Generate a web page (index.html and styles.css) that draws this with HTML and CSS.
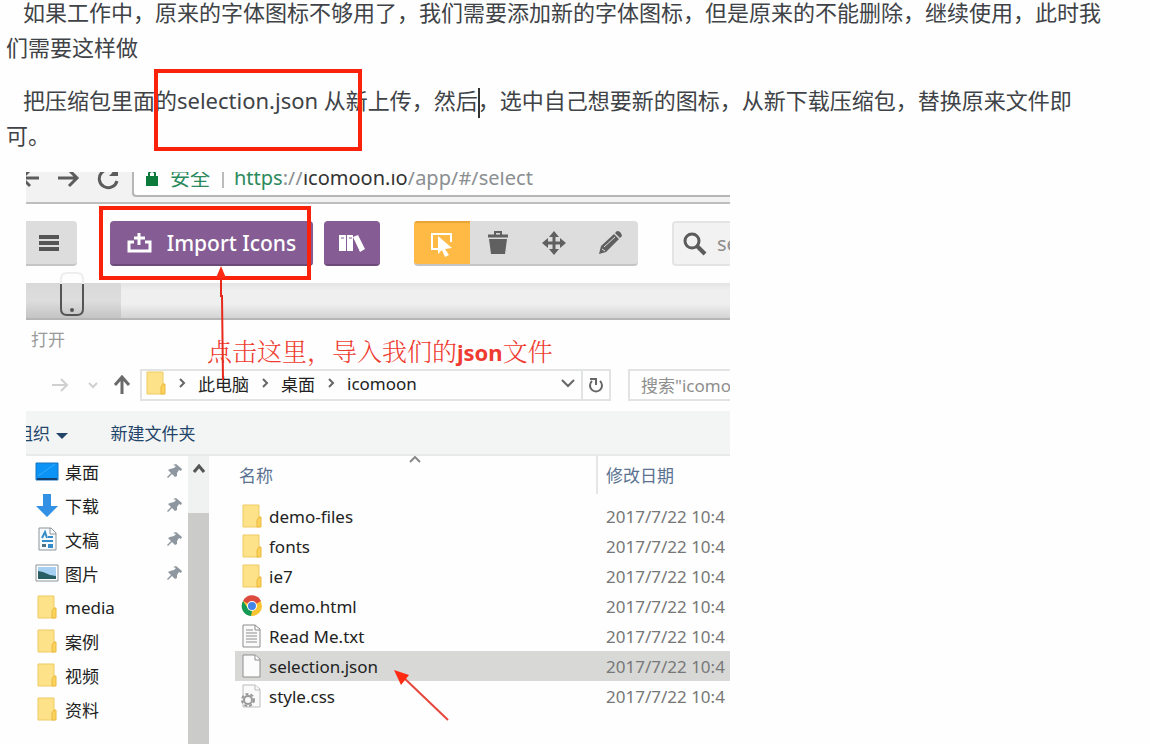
FILE: index.html
```
<!DOCTYPE html>
<html lang="zh-CN">
<head>
    <meta charset="UTF-8">
    <meta name="viewport" content="width=device-width, initial-scale=1.0">
    <title>追加字体图标</title>
    <link rel="stylesheet" href="styles.css">
</head>
<body>

    <!-- 公用图标 -->
    <svg class="sprite" width="0" height="0">
        <symbol id="folder" viewBox="0 0 20 24">
            <path d="M1 1h16v22H1z" fill="#fde28a" stroke="#efcb63"/>
            <path d="M15 23v-7l2-3h2v10z" fill="#fbd25c" stroke="#eab93f"/>
        </symbol>
        <symbol id="pin" viewBox="0 0 16 16">
            <path d="M9 1l6 5-1 2-2-1-2 3 0 3-2 1-3-3-4 4-1-1 4-4-3-3 2-1 4-1 2-2-3-1z" fill="#8e979f"/>
        </symbol>
        <symbol id="crumb" viewBox="0 0 8 12">
            <path d="M2 2l4 4-4 4" fill="none" stroke="#666" stroke-width="2"/>
        </symbol>
    </svg>

    <div class="article">
        <p>如果工作中，原来的字体图标不够用了，我们需要添加新的字体图标，但是原来的不能删除，继续使用，此时我<br>们需要这样做</p>
        <p>把压缩包里面的selection.json 从新上传，然后<span class="caret"></span>，选中自己想要新的图标，从新下载压缩包，替换原来文件即<br>可。</p>
        <div class="mark mark-text"></div>

        <div class="shot">
            <!-- 浏览器地址栏 -->
            <div class="browser">
                <svg class="nav-icons" width="94" height="24" viewBox="0 0 94 24" fill="none" stroke="#5c5c5c" stroke-width="3">
                    <path d="M13 12H-4M4 4l-8 8 8 8M32 12h18M43 4l8 8-8 8M90 8a9 9 0 1 0 1 7"/>
                    <path d="M92 1v9h-9z" fill="#5c5c5c" stroke="none"/>
                </svg>
                <div class="url">
                    <svg width="12" height="18" viewBox="0 0 12 18"><path d="M3 8V4q3-4 6 0v4" fill="none" stroke="#0b7a3b" stroke-width="2"/><path d="M0 7h12v10H0z" fill="#0b7a3b"/></svg>
                    <span class="safe">安全</span>
                    <span class="bar"></span>
                    <span class="address"><span class="green">https</span>://<b>icomoon.io</b>/app/#/select</span>
                </div>
            </div>

            <!-- icomoon 工具栏 -->
            <div class="toolbar">
                <button class="btn menu-btn" aria-label="菜单">
                    <svg width="20" height="16" viewBox="0 0 20 16"><path d="M0 2h20M0 8h20M0 14h20" stroke="#555" stroke-width="4"/></svg>
                </button>
                <button class="btn purple import-btn">
                    <svg width="26" height="22" viewBox="0 0 26 22" fill="none" stroke="#fff" stroke-width="3"><path d="M7 10H2v9h21v-9h-5M12 1v12M7 6h11"/></svg>
                    Import Icons
                </button>
                <button class="btn purple lib-btn" aria-label="图标库">
                    <svg width="26" height="18" viewBox="0 0 26 18" fill="#fff"><path d="M0 1h7v16H0zM8 1h6v16H8zM14 3l5-2 7 14-5 3z"/><path d="M2 4h3M10 4h3" stroke="#855c94"/></svg>
                </button>
                <div class="tools">
                    <button class="active" aria-label="选择">
                        <svg width="24" height="26" viewBox="0 0 24 26"><path d="M8 18H2V3h19v8" fill="none" stroke="#fff" stroke-width="2"/><path d="M8 5l14 12-7 1 4 6-4 2-3-7-4 4z" fill="#fff"/></svg>
                    </button>
                    <button aria-label="删除">
                        <svg width="22" height="24" viewBox="0 0 22 24"><path d="M1 5h20" fill="none" stroke="#606060" stroke-width="3"/><path d="M8 4V1h6v3" fill="none" stroke="#606060" stroke-width="2"/><path d="M2 8h18l-2 15H4z" fill="#606060"/></svg>
                    </button>
                    <button aria-label="移动">
                        <svg width="24" height="24" viewBox="0 0 24 24"><path d="M12 4v16M4 12h16" stroke="#606060" stroke-width="3"/><path d="M12 0l5 6H7zM12 24l5-6H7zM0 12l6-5v10zM24 12l-6-5v10z" fill="#606060"/></svg>
                    </button>
                    <button aria-label="编辑">
                        <svg width="24" height="24" viewBox="0 0 24 24"><path d="M1 23l2-8L16 3l5 5L8 21zM17 2l2-2q4 0 5 5l-2 2z" fill="#606060"/><path d="M6 16L17 6M4 18l3 2" stroke="#dcdddc"/></svg>
                    </button>
                </div>
                <label class="search">
                    <svg width="24" height="24" viewBox="0 0 24 24" fill="none" stroke="#5c5c5c"><circle cx="9" cy="9" r="7" stroke-width="3"/><path d="M14 14l8 8" stroke-width="4"/></svg>
                    <input type="text" placeholder="search" aria-label="search">
                </label>
            </div>
            <div class="strip">
                <div class="strip-tab">
                    <svg width="24" height="45" viewBox="0 0 24 45" fill="none" stroke="#555" stroke-width="2"><path d="M1 12V7q0-6 6-6h10q6 0 6 6v5" stroke="#eee"/><path d="M1 12v25q0 6 6 6h10q6 0 6-6V12"/><circle cx="12" cy="38" r="2" fill="#555" stroke="none"/></svg>
                </div>
            </div>

            <!-- 打开文件窗口 -->
            <div class="dialog-title">打开</div>
            <div class="path-row">
                <svg class="path-icons" width="106" height="20" viewBox="0 0 106 20" fill="none">
                    <path d="M0 10h15M9 4l6 6-6 6" stroke="#d0d0d0" stroke-width="2"/>
                    <path d="M37 8l4 4 4-4" stroke="#d0d0d0" stroke-width="2"/>
                    <path d="M70 19V3M63 10l7-8 7 8" stroke="#6a6a6a" stroke-width="3"/>
                </svg>
                <div class="path-box">
                    <svg width="20" height="24"><use href="#folder"/></svg>
                    <svg width="8" height="12"><use href="#crumb"/></svg>
                    <span>此电脑</span>
                    <svg width="8" height="12"><use href="#crumb"/></svg>
                    <span>桌面</span>
                    <svg width="8" height="12"><use href="#crumb"/></svg>
                    <span>icomoon</span>
                    <svg class="drop" width="14" height="10" viewBox="0 0 14 10"><path d="M1 2l6 6 6-6" fill="none" stroke="#666" stroke-width="2"/></svg>
                </div>
                <button class="refresh" aria-label="刷新">
                    <svg width="16" height="18" viewBox="0 0 16 18" fill="none" stroke="#666" stroke-width="2"><path d="M12 5a6 6 0 1 1-8 0M2 3h6v6"/></svg>
                </button>
                <input class="find" type="text" placeholder='搜索"icomoon"' aria-label="搜索">
            </div>
            <div class="command">
                <button class="organize">组织 <span class="triangle"></span></button>
                <button>新建文件夹</button>
            </div>

            <div class="files">
                <ul class="side">
                    <li><svg width="24" height="24" viewBox="0 0 24 24"><path d="M1 4h22v17H1z" fill="#0b93f6" stroke="#1674bf"/><path d="M2 20h20" stroke="#123f70" stroke-width="2"/><path d="M3 17L20 5" stroke="#37adff"/></svg>桌面<svg class="pin" width="16" height="16"><use href="#pin"/></svg></li>
                    <li><svg width="24" height="24" viewBox="0 0 24 24"><path d="M8 1h8v12h7L12 24 1 13h7z" fill="#3290e5"/></svg>下载<svg class="pin" width="16" height="16"><use href="#pin"/></svg></li>
                    <li><svg width="24" height="24" viewBox="0 0 24 24"><path d="M4 1h12l5 5v17H4z" fill="#f7fafc" stroke="#8b949b"/><path d="M15 1v6h6" fill="none" stroke="#8b949b"/><path d="M7 11l3-6 2 6M13 10h5M7 14h11M13 18h5M13 20h5" fill="none" stroke="#338bc8" stroke-width="2"/><path d="M7 17h4v3H7z" fill="#4b7182"/></svg>文稿<svg class="pin" width="16" height="16"><use href="#pin"/></svg></li>
                    <li><svg width="24" height="24" viewBox="0 0 24 24"><path d="M1 4h22v16H1z" fill="#fff" stroke="#8b949b"/><path d="M3 6h18v12H3z" fill="#a5d0f2"/><path d="M3 10l5 1 7 3 6 1v3H3z" fill="#285e64"/></svg>图片<svg class="pin" width="16" height="16"><use href="#pin"/></svg></li>
                    <li><svg width="24" height="24"><use href="#folder"/></svg>media</li>
                    <li><svg width="24" height="24"><use href="#folder"/></svg>案例</li>
                    <li><svg width="24" height="24"><use href="#folder"/></svg>视频</li>
                    <li><svg width="24" height="24"><use href="#folder"/></svg>资料</li>
                </ul>
                <div class="scroll">
                    <svg width="12" height="10" viewBox="0 0 12 10"><path d="M1 8l5-6 5 6" fill="none" stroke="#555" stroke-width="3"/></svg>
                    <div class="thumb"></div>
                </div>
                <table>
                    <thead>
                        <tr>
                            <th class="col-name">名称<svg class="sort" width="12" height="7" viewBox="0 0 12 7"><path d="M1 6l5-5 5 5" fill="none" stroke="#888" stroke-width="2"/></svg></th>
                            <th class="col-date">修改日期</th>
                        </tr>
                    </thead>
                    <tbody>
                        <tr>
                            <td><svg width="22" height="24"><use href="#folder"/></svg>demo-files</td>
                            <td>2017/7/22 10:4</td>
                        </tr>
                        <tr>
                            <td><svg width="22" height="24"><use href="#folder"/></svg>fonts</td>
                            <td>2017/7/22 10:4</td>
                        </tr>
                        <tr>
                            <td><svg width="22" height="24"><use href="#folder"/></svg>ie7</td>
                            <td>2017/7/22 10:4</td>
                        </tr>
                        <tr>
                            <td><svg width="22" height="24" viewBox="0 0 22 24"><circle cx="11" cy="12" r="10" fill="#f7c531"/><path d="M11 12L2 7a10 10 0 0 1 18 0z" fill="#dd4b3e"/><path d="M2 7l6 9 3 1-1 5A10 10 0 0 1 2 7z" fill="#159957"/><circle cx="11" cy="12" r="5" fill="#fff"/><circle cx="11" cy="12" r="4" fill="#4285e8"/></svg>demo.html</td>
                            <td>2017/7/22 10:4</td>
                        </tr>
                        <tr>
                            <td><svg width="22" height="24" viewBox="0 0 22 24" fill="none" stroke="#8d8d8d"><path d="M2 1h12l5 4v18H2z" fill="#fafafa"/><path d="M14 1v5h5M5 6h7M5 9h11M5 12h11M5 15h11M5 18h11"/></svg>Read Me.txt</td>
                            <td>2017/7/22 10:4</td>
                        </tr>
                        <tr class="selected">
                            <td><svg width="22" height="24" viewBox="0 0 22 24" fill="#fcfcfc" stroke="#8d8d8d"><path d="M2 1h12l5 4v18H2z"/><path d="M14 1v5h5"/></svg>selection.json</td>
                            <td>2017/7/22 10:4</td>
                        </tr>
                        <tr>
                            <td><svg width="22" height="24" viewBox="0 0 22 24" fill="#fafafa" stroke="#999"><path d="M2 1h12l5 4v18H2z" stroke="#bbb"/><path d="M14 1v5h5" stroke="#bbb"/><circle cx="7" cy="16" r="6" stroke-width="2" stroke-dasharray="3 2"/><circle cx="7" cy="16" r="4" stroke-width="2"/></svg>style.css</td>
                            <td>2017/7/22 10:4</td>
                        </tr>
                    </tbody>
                </table>
            </div>

            <!-- 红色标注 -->
            <div class="mark mark-import"></div>
            <div class="note">点击这里，导入我们的<b>json</b>文件</div>
            <svg class="arrow arrow-up" width="12" height="114" viewBox="0 0 12 114"><path d="M6 8v22h1l1 84" fill="none" stroke="#e8291c" stroke-width="2"/><path d="M6 0l5 12H1z" fill="#ff2a12"/></svg>
            <svg class="arrow arrow-file" width="56" height="54" viewBox="0 0 56 54"><path d="M8 6l46 44" stroke="#e8453c" stroke-width="2"/><path d="M0 0l15 5-8 10z" fill="#ff2a12"/></svg>
        </div>
    </div>

</body>
</html>
```
FILE: styles.css
```
* {
    box-sizing: border-box;
}

body {
    margin: 0;
    background-color: #fdfefd;
    font-family: "Noto Sans", "Noto Sans CJK SC", sans-serif;
    color: #3f4347;
    overflow: hidden;
}

svg {
    flex: none;
}

button, input {
    font: inherit;
    border: none;
    background: none;
    padding: 0;
    margin: 0;
}

.sprite {
    position: absolute;
}

/* 正文 */
.article {
    position: relative;
    margin-top: -5px;
    padding: 0 6px;
}

.article p {
    margin: 0;
    padding-bottom: 18px;
    font-size: 22px;
    line-height: 35px;
    text-indent: 17px;
    white-space: nowrap;
}

.caret {
    display: inline-block;
    width: 2px;
    height: 30px;
    margin-right: -2px;
    background-color: #333;
    vertical-align: middle;
}

/* 红框 */
.mark {
    position: absolute;
    border: 4px solid #fb220c;
}

.mark-text {
    left: 154px;
    top: 74px;
    width: 208px;
    height: 82px;
}

.mark-import {
    left: 73px;
    top: 34px;
    width: 212px;
    height: 74px;
}

/* 截图区域 */
.shot {
    position: relative;
    max-width: 704px;
    margin-top: 1px;
    margin-left: 20px;
    overflow: hidden;
    font-size: 17px;
    white-space: nowrap;
}

.browser {
    display: flex;
    align-items: flex-start;
    gap: 12px;
    height: 44px;
    margin-top: -12px;
    background-color: #f1f2f1;
    border-bottom: 2px solid #bdbebd;
}

.nav-icons {
    margin-top: 6px;
}

.url {
    flex: 1;
    display: flex;
    align-items: center;
    height: 37px;
    padding: 0 0 2px 12px;
    background-color: #fdfefd;
    border: 2px solid #b5b6b5;
    border-right: none;
    border-radius: 4px 0 0 4px;
    font-size: 20px;
    color: #8b8f92;
}

.safe {
    margin-left: 12px;
    color: #2c8a5c;
}

.bar {
    width: 2px;
    height: 20px;
    margin: 0 10px 0 12px;
    background-color: #bbb;
}

.green {
    color: #2c8a5c;
}

.address b {
    font-weight: normal;
    color: #333;
}

.toolbar {
    display: flex;
    height: 79px;
    padding-top: 17px;
}

.btn {
    height: 45px;
    display: flex;
    align-items: center;
    justify-content: center;
    flex: none;
    border-radius: 4px;
    border-bottom: 2px solid #c4c5c4;
    background-color: #dcdddc;
}

.menu-btn {
    width: 51px;
    padding-right: 6px;
    border-radius: 0 4px 4px 0;
}

.purple {
    background-color: #855c94;
    border-bottom-color: #6c4a7a;
    color: #fff;
}

.import-btn {
    width: 203px;
    margin-left: 33px;
    gap: 14px;
    font-size: 21px;
    font-weight: 500;
}

.lib-btn {
    width: 56px;
    margin-left: 11px;
}

.tools {
    display: flex;
    flex: none;
    width: 224px;
    height: 45px;
    margin-left: 34px;
    border-radius: 4px;
    border-bottom: 2px solid #c4c5c4;
    background-color: #dcdddc;
    overflow: hidden;
}

.tools button {
    flex: 1;
    display: flex;
    align-items: center;
    justify-content: center;
}

.tools .active {
    background-color: #ffba45;
    border-top: 2px solid #eba536;
}

.search {
    display: flex;
    flex: none;
    align-items: center;
    gap: 10px;
    width: 240px;
    height: 45px;
    margin-left: 34px;
    padding-left: 9px;
    background-color: #f1f2f1;
    border: 2px solid #e3e4e3;
    border-radius: 4px;
    font-size: 20px;
}

.search input {
    width: 150px;
}

input::placeholder {
    color: #8e8e8e;
    opacity: 1;
}

.strip {
    height: 37px;
    background: linear-gradient(#e3e4e3, #eeefee 20%, #eeefee 60%, #d3d4d3);
    border-bottom: 2px solid #b5b6b5;
}

.strip-tab {
    display: flex;
    justify-content: center;
    width: 95px;
    height: 35px;
    padding-right: 4px;
    background: linear-gradient(#d8d9d8, #dcdddc 50%, #c3c4c3);
}

.strip-tab svg {
    margin-top: -11px;
}

/* 文件窗口 */
.dialog-title {
    padding: 7px 5px;
    line-height: 25px;
    height: 49px;
    color: #9a9a9a;
}

.path-row {
    display: flex;
    height: 42px;
    padding: 0 0 10px 26px;
}

.path-icons {
    margin: 6px -18px 0 0;
}

.path-box {
    flex: none;
    display: flex;
    align-items: center;
    gap: 12px;
    width: 443px;
    padding: 0 6px 4px 4px;
    border: 2px solid #e2e4e3;
    color: #222;
}

.drop {
    margin-left: auto;
}

.refresh {
    width: 28px;
    flex: none;
    display: flex;
    align-items: center;
    justify-content: center;
    border: 2px solid #e2e4e3;
    border-left: none;
}

.find {
    flex: none;
    width: 220px;
    margin-left: 17px;
    padding-left: 11px;
    border: 2px solid #e2e4e3;
}

.command {
    display: flex;
    height: 45px;
    background-color: #f3f5f5;
    border-bottom: 2px solid #e8eaea;
}

.command button {
    color: #234469;
}

.organize {
    margin: 0 42px 0 -10px;
}

.triangle {
    display: inline-block;
    margin-left: 2px;
    border: 6px solid transparent;
    border-top-color: #234469;
    border-bottom: none;
    vertical-align: middle;
}

.files {
    display: flex;
    height: 288px;
}

.side {
    width: 162px;
    margin: -2px 0 0;
    padding: 0 5px 0 9px;
    list-style: none;
    color: #222;
}

.side li {
    display: flex;
    align-items: center;
    gap: 6px;
    height: 34px;
}

.pin {
    margin-left: auto;
}

.scroll {
    width: 21px;
    display: flex;
    flex-direction: column;
    align-items: center;
    padding-top: 8px;
    background-color: #f0f1f1;
}

.thumb {
    width: 100%;
    flex: 1;
    margin-top: 39px;
    background-color: #cbccca;
}

table {
    flex: 1;
    height: 0;
    margin-left: 26px;
    table-layout: fixed;
    border-collapse: collapse;
}

th {
    position: relative;
    height: 38px;
    padding: 0 4px 2px;
    font-weight: normal;
    text-align: left;
    color: #5b7391;
}

.col-name {
    width: 362px;
}

.col-date {
    padding-left: 8px;
    border-left: 2px solid #e5e7e7;
}

.sort {
    position: absolute;
    left: 174px;
    top: 0;
}

thead::after {
    content: "";
    display: block;
    height: 7px;
}

td {
    height: 30px;
    padding: 2px 0 0 9px;
    line-height: 24px;
    color: #777;
}

td:first-child {
    padding: 0 0 0 6px;
    color: #222;
}

td svg {
    margin-right: 6px;
    vertical-align: -5px;
}

.selected {
    background-color: #d8d9d7;
}

/* 标注文字和箭头 */
.note {
    position: absolute;
    left: 181px;
    top: 160px;
    font-size: 25px;
    line-height: 36px;
    font-family: "Noto Serif CJK SC", "Noto Sans CJK SC", serif;
    font-weight: 300;
    color: #ee3a30;
}

.note b {
    font: bold 22px "Noto Sans", sans-serif;
}

.arrow {
    position: absolute;
}

.arrow-up {
    left: 189px;
    top: 94px;
}

.arrow-file {
    left: 368px;
    top: 498px;
}
```
